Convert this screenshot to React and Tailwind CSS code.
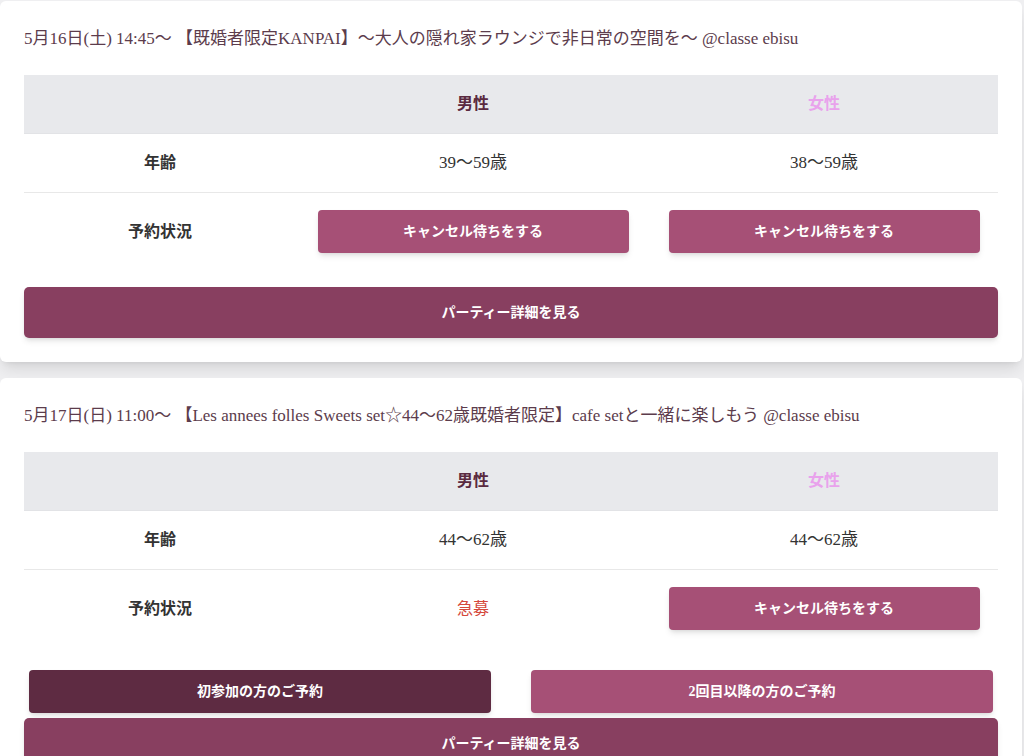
import React from "react";

const parties = [
    {
        id: 1,
        title: "5月16日(土) 14:45〜 【既婚者限定KANPAI】〜大人の隠れ家ラウンジで非日常の空間を〜 @classe ebisu",
        male: { age: "39〜59歳", status: "cancel" },
        female: { age: "38〜59歳", status: "cancel" },
        booking: false,
    },
    {
        id: 2,
        title: "5月17日(日) 11:00〜 【Les annees folles Sweets set☆44〜62歳既婚者限定】cafe setと一緒に楽しもう @classe ebisu",
        male: { age: "44〜62歳", status: "urgent" },
        female: { age: "44〜62歳", status: "cancel" },
        booking: true,
    },
];

function StatusCell({ status }) {
    if (status === "urgent") {
        return <span className="text-[16px] text-[#d5473b]">急募</span>;
    }
    return (
        <button className="w-[311px] h-[43px] rounded-[4px] bg-[#a65076] text-white text-[14px] font-bold shadow-md">
            キャンセル待ちをする
        </button>
    );
}

function PartyCard({ party }) {
    return (
        <div className="bg-white rounded-[6px] shadow-lg px-6 pt-[25px] pb-6 mr-[2px]">
            <h2 className="text-[17px] leading-[26px] text-[#5c3c4c] mb-[23px]">
                {party.title}
            </h2>
            <div className="grid grid-cols-[272px_354px_1fr] text-[16px] text-[#333]">
                <div className="h-[59px] bg-[#e8e9ec] border-b border-[#e2e3e6]" />
                <div className="h-[59px] bg-[#e8e9ec] border-b border-[#e2e3e6] flex items-center justify-center font-bold text-[#5a2a40]">
                    男性
                </div>
                <div className="h-[59px] bg-[#e8e9ec] border-b border-[#e2e3e6] flex items-center justify-center font-bold text-[#e9a2ec]">
                    女性
                </div>

                <div className="h-[59px] border-b border-[#e8e8e8] flex items-center justify-center font-bold">
                    年齢
                </div>
                <div className="h-[59px] border-b border-[#e8e8e8] flex items-center justify-center text-[17px]">
                    {party.male.age}
                </div>
                <div className="h-[59px] border-b border-[#e8e8e8] flex items-center justify-center text-[17px]">
                    {party.female.age}
                </div>

                <div className="h-[77px] flex items-center justify-center font-bold">
                    予約状況
                </div>
                <div className="h-[77px] flex items-center justify-center">
                    <StatusCell status={party.male.status} />
                </div>
                <div className="h-[77px] flex items-center justify-center">
                    <StatusCell status={party.female.status} />
                </div>
            </div>

            {party.booking ? (
                <div className="mt-[23px]">
                    <div className="grid grid-cols-2 gap-10 px-[5px]">
                        <button className="h-[43px] rounded-[4px] bg-[#5e2b42] text-white text-[14px] font-bold shadow-md">
                            初参加の方のご予約
                        </button>
                        <button className="h-[43px] rounded-[4px] bg-[#a65076] text-white text-[14px] font-bold shadow-md">
                            2回目以降の方のご予約
                        </button>
                    </div>
                    <button className="mt-[5px] w-full h-[51px] rounded-[5px] bg-[#883f60] text-white text-[14px] font-bold shadow-md">
                        パーティー詳細を見る
                    </button>
                </div>
            ) : (
                <button className="mt-[17px] w-full h-[51px] rounded-[5px] bg-[#883f60] text-white text-[14px] font-bold shadow-md">
                    パーティー詳細を見る
                </button>
            )}
        </div>
    );
}

export default function App() {
    return (
        <div
            className="min-h-screen bg-[#efeff1] pt-[1px] flex flex-col gap-4"
            style={{ fontFamily: '"Liberation Serif", "Noto Sans CJK JP", serif' }}
        >
            {parties.map((p) => (
                <PartyCard key={p.id} party={p} />
            ))}
        </div>
    );
}
